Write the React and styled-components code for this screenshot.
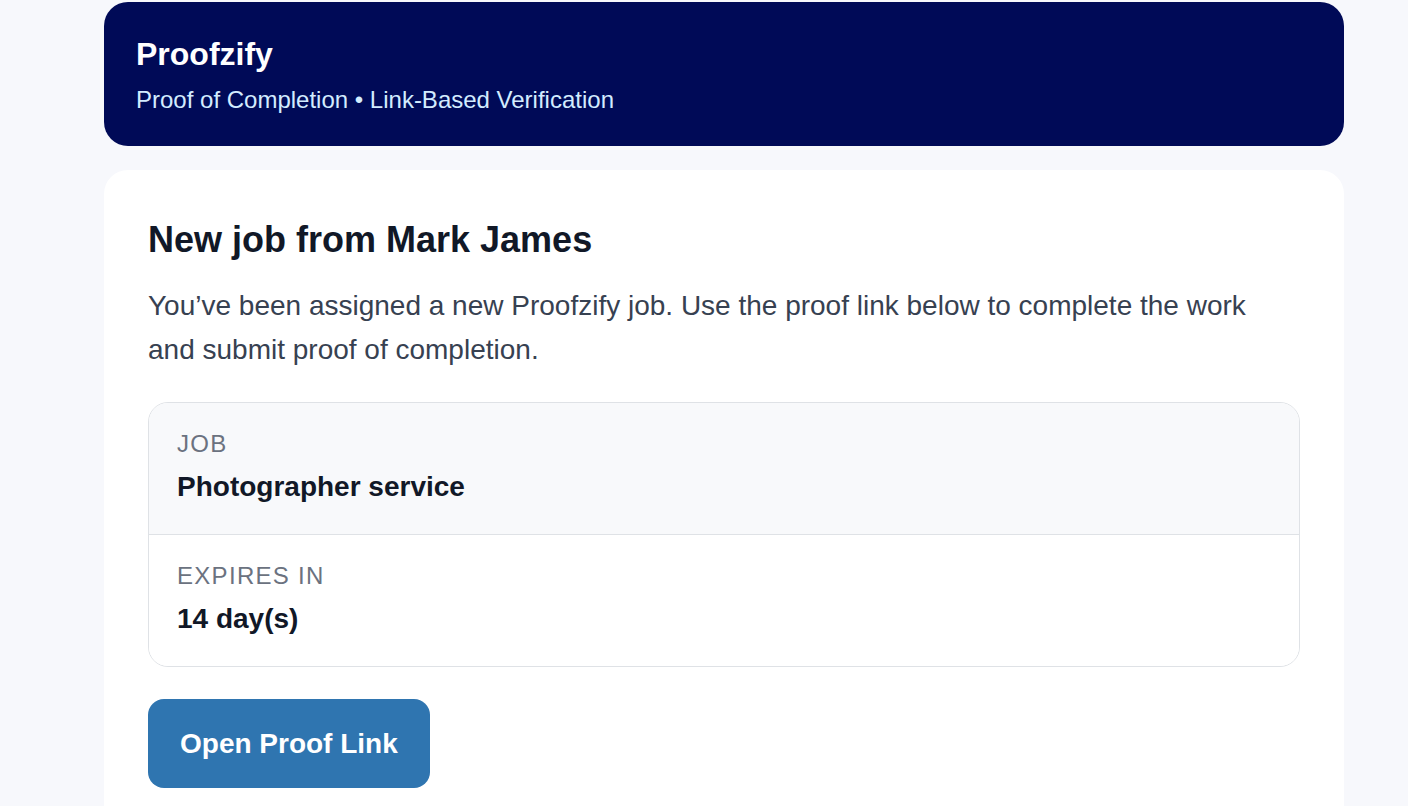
import styled, { createGlobalStyle } from "styled-components";

const GlobalStyle = createGlobalStyle`
  body {
    margin: 0;
    background: #f7f8fc;
    font-family: "Liberation Sans", Arial, sans-serif;
  }
`;

const Page = styled.div`
  padding: 2px 64px 40px 104px;
`;

const Wrapper = styled.div`
  width: 1240px;
  display: flex;
  flex-direction: column;
  gap: 24px;
`;

const Header = styled.header`
  background: #000a57;
  border-radius: 24px;
  padding: 32px;
`;

const Brand = styled.div`
  color: #ffffff;
  font-size: 32px;
  font-weight: 700;
  line-height: 40px;
`;

const Tagline = styled.div`
  color: #d3ecff;
  font-size: 24px;
  line-height: 28px;
  margin-top: 12px;
`;

const Card = styled.main`
  background: #ffffff;
  border-radius: 24px;
  padding: 46px 44px 44px;
`;

const Heading = styled.h1`
  margin: 0;
  color: #111827;
  font-size: 36px;
  font-weight: 700;
  line-height: 47px;
`;

const Intro = styled.p`
  margin: 21px 0 0;
  color: #374151;
  font-size: 28px;
  line-height: 44px;
  max-width: 1120px;
`;

const Details = styled.div`
  margin-top: 30px;
  border: 1px solid #dfe2e6;
  border-radius: 20px;
  overflow: hidden;
`;

const Row = styled.div`
  padding: 24px 28px 27px;
  background: ${(p) => (p.$shaded ? "#f8f9fb" : "#ffffff")};
  & + & {
    border-top: 1px solid #dfe2e6;
  }
`;

const Label = styled.div`
  color: #6b7280;
  font-size: 24px;
  line-height: 34px;
  letter-spacing: 1.3px;
  text-transform: uppercase;
`;

const Value = styled.div`
  margin-top: 6px;
  color: #111827;
  font-size: 28px;
  font-weight: 700;
  line-height: 40px;
`;

const Button = styled.a`
  display: inline-block;
  margin-top: 32px;
  padding: 28px 32px;
  background: #2f75b0;
  color: #ffffff;
  border-radius: 16px;
  font-size: 28px;
  font-weight: 700;
  line-height: 33px;
  text-decoration: none;
`;

const details = [
  { label: "Job", value: "Photographer service", shaded: true },
  { label: "Expires in", value: "14 day(s)" },
];

const App = () => {
  return (
    <>
      <GlobalStyle />
      <Page>
        <Wrapper>
          <Header>
            <Brand>Proofzify</Brand>
            <Tagline>Proof of Completion • Link-Based Verification</Tagline>
          </Header>
          <Card>
            <Heading>New job from Mark James</Heading>
            <Intro>
              You’ve been assigned a new Proofzify job. Use the proof link below
              to complete the work and submit proof of completion.
            </Intro>
            <Details>
              {details.map((d) => (
                <Row key={d.label} $shaded={d.shaded}>
                  <Label>{d.label}</Label>
                  <Value>{d.value}</Value>
                </Row>
              ))}
            </Details>
            <Button href="#">Open Proof Link</Button>
          </Card>
        </Wrapper>
      </Page>
    </>
  );
};

export default App;
